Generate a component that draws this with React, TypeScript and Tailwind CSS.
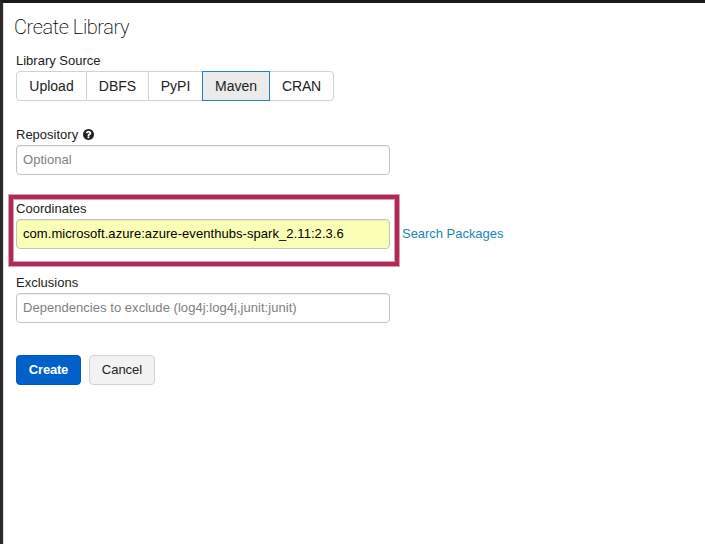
import React from "react";

const inputClass =
  "block h-[30px] w-[374px] rounded-[4px] border border-[#c3c3c3] px-[6px] pb-px text-[13px] leading-[18px] tracking-[0.06px] outline-none shadow-[inset_0_1px_1px_rgba(0,0,0,0.06)] placeholder:text-[#808080] placeholder:tracking-[0.04px] placeholder:opacity-100";

function HelpIcon() {
  return (
    <svg viewBox="0 0 1536 1536" className="mb-[2px] ml-[5px] h-[11px] w-[11px] fill-[#222]" aria-hidden="true">
      <path d="M896 1248v-192q0-14-9-23t-23-9H672q-14 0-23 9t-9 23v192q0 14 9 23t23 9h192q14 0 23-9t9-23zm256-672q0-88-55.500-163T958 297t-170-41q-243 0-371 213-15 24 8 42l132 100q7 6 19 6 16 0 25-12 53-68 86-92 34-24 86-24 48 0 85.500 26t37.500 59q0 38-20 61t-68 45q-63 28-115.500 86.500T640 892v36q0 14 9 23t23 9h192q14 0 23-9t9-23q0-19 21.500-49.500T972 829q32-18 49-28.500t46-35 44.500-48 28-60.500 12.500-81zm384 192q0 209-103 385.500T1153.500 1433 768 1536t-385.500-103T103 1153.500 0 768t103-385.500T382.500 103 768 0t385.500 103T1433 382.500 1536 768z" />
    </svg>
  );
}

const sources = [
  { name: "Upload", style: "w-[71px] rounded-l-[4px] border-[#d2d2d2]" },
  { name: "DBFS", style: "-ml-px w-[63px] border-[#d2d2d2]" },
  { name: "PyPI", style: "-ml-px w-[55px] border-[#d2d2d2]" },
  { name: "Maven", style: "relative z-10 -ml-px w-[68px] border-[#2581c4] bg-[#ebebeb]" },
  { name: "CRAN", style: "-ml-px w-[65px] rounded-r-[4px] border-[#d2d2d2] tracking-[-0.2px]" },
];

export default function App() {
  return (
    <main className="h-[544px] w-[705px] overflow-hidden border-l-[3px] border-t-[3px] border-l-[#2b2a2b] border-t-[#1b191a] bg-white font-['Liberation_Sans',Arial,sans-serif] text-[13px] leading-[18px] text-[#222]">
      <div className="h-full border-l border-[#e3e3e3] pl-[12px]">
        <h1 className="-ml-[2px] h-[49px] pt-[10px] font-['Roboto',sans-serif] text-[20px] font-extralight leading-[28px] tracking-[-0.4px] text-black">
          Create Library
        </h1>

        <div className="h-[73px]">
          <div className="h-[19px]">Library Source</div>
          <div className="flex">
            {sources.map((s) => (
              <button key={s.name} className={"h-[30px] border pb-px text-center text-[14px] leading-[18px] " + s.style}>
                {s.name}
              </button>
            ))}
          </div>
        </div>

        <div className="h-[74px]">
          <label className="flex h-[20px] items-center">
            Repository
            <HelpIcon />
          </label>
          <input className={inputClass} placeholder="Optional" />
        </div>

        <div className="relative h-[74px]">
          <div className="pointer-events-none absolute -left-[8px] -top-[5px] h-[73px] w-[392px] border border-[#dc9db3]">
            <div className="h-full w-full border-4 border-[#b02a57]">
              <div className="h-full w-full border border-[#dc9db3]" />
            </div>
          </div>
          <label className="block h-[20px] pt-px tracking-[0.04px]">Coordinates</label>
          <div className="flex items-center">
            <input className={inputClass + " bg-[#faffb5] text-black"} defaultValue="com.microsoft.azure:azure-eventhubs-spark_2.11:2.3.6" />
            <a className="ml-[12px] tracking-[-0.03px] text-[#2188b3]">Search Packages</a>
          </div>
        </div>

        <div className="h-[82px]">
          <label className="block h-[20px] pt-px">Exclusions</label>
          <input className={inputClass} placeholder="Dependencies to exclude (log4j:log4j,junit:junit)" />
        </div>

        <div className="flex gap-[8px]">
          <button className="h-[30px] w-[65px] rounded-[4px] border border-[#0059b8] bg-[#0062c8] pb-px font-bold tracking-[-0.2px] text-white">
            Create
          </button>
          <button className="h-[30px] w-[66px] rounded-[4px] border border-[#d2d2d2] bg-[#f2f2f2] pb-px">Cancel</button>
        </div>
      </div>
    </main>
  );
}
